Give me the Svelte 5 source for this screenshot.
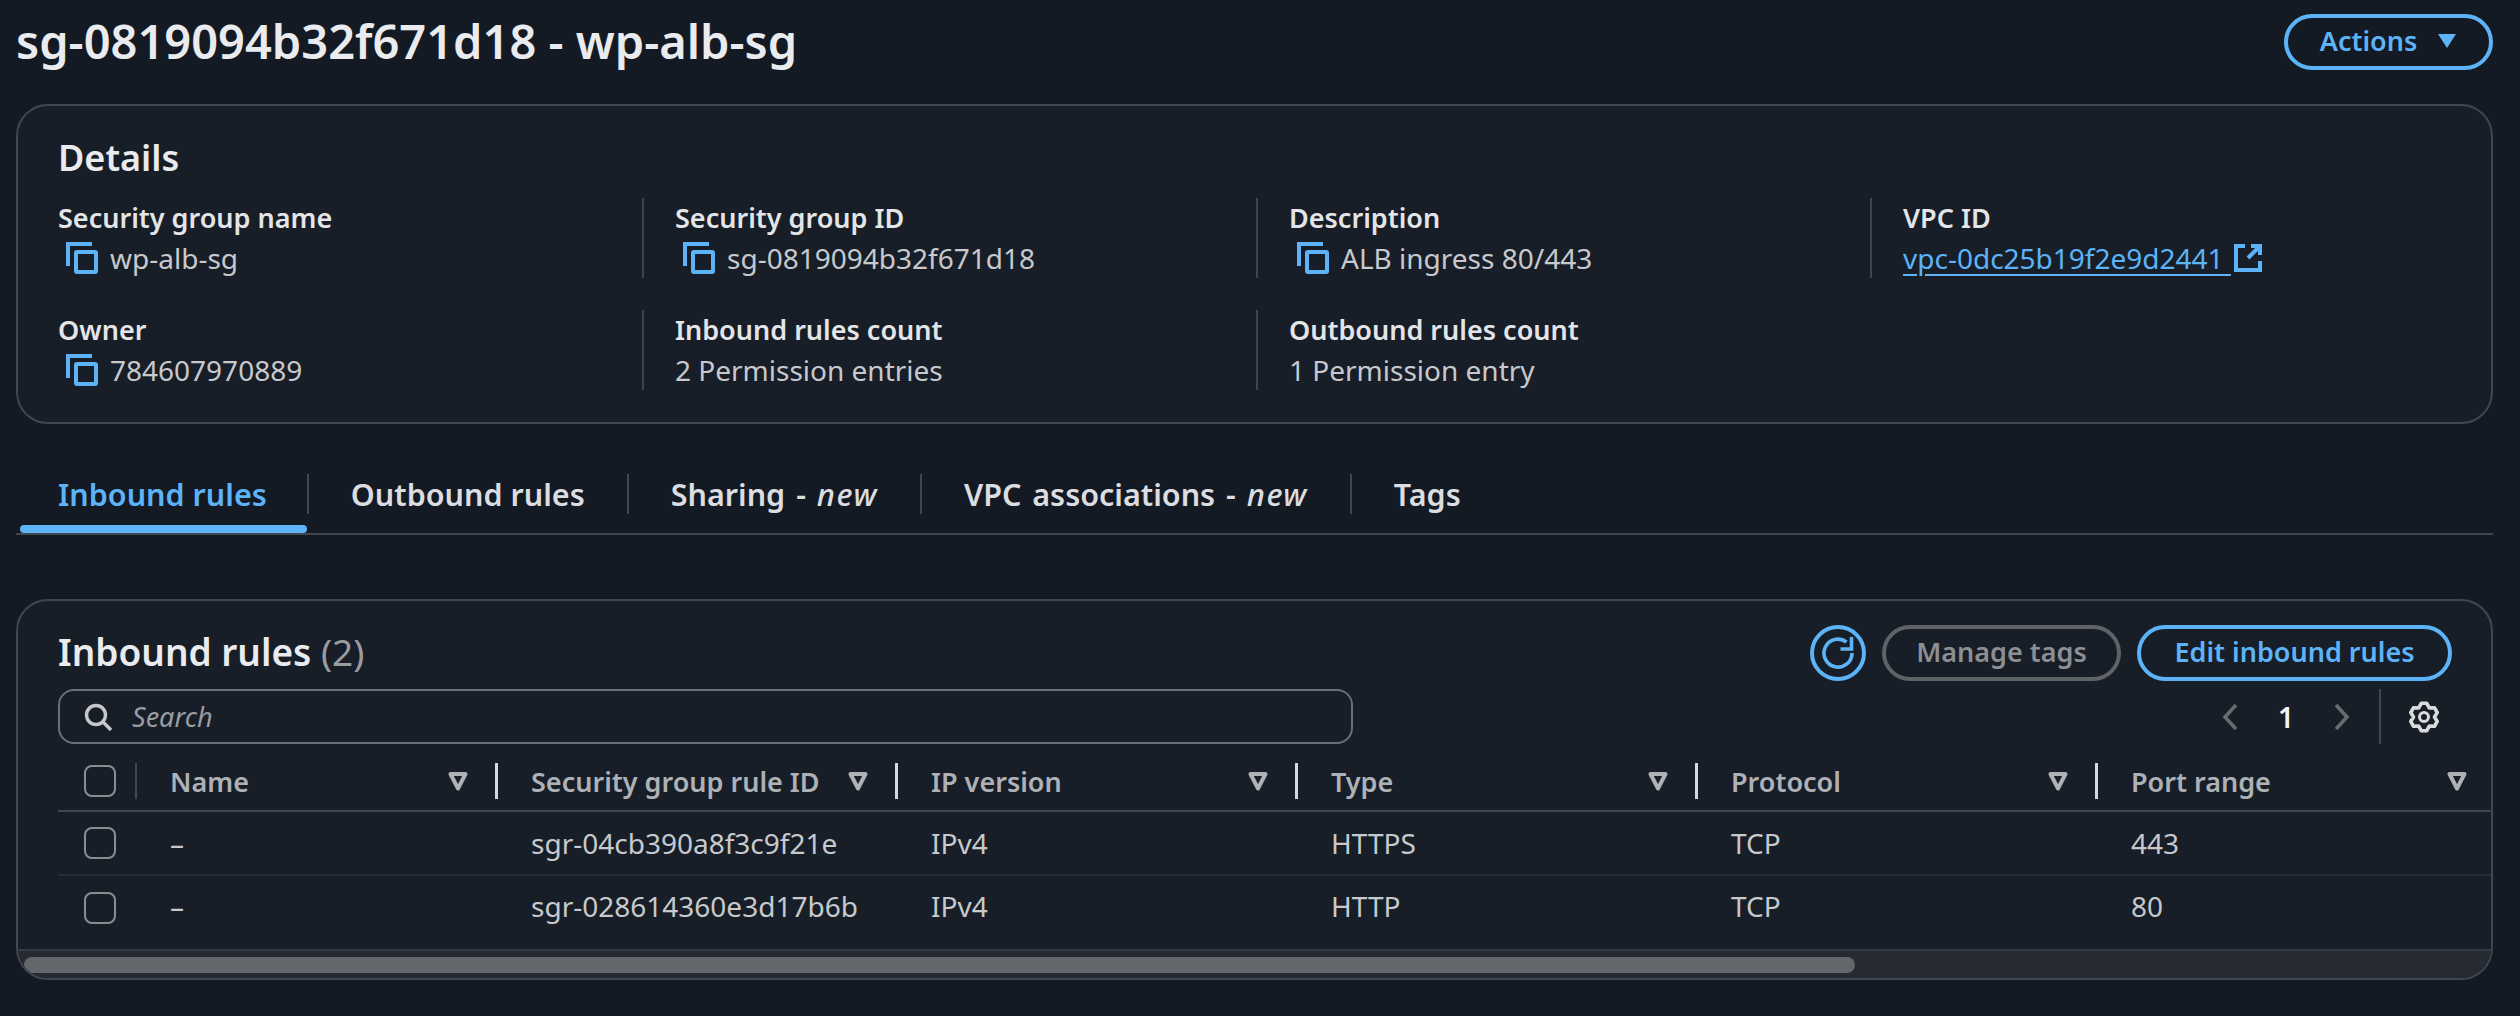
<script>
  const details = [
    { label: "Security group name", value: "wp-alb-sg", copy: true },
    { label: "Security group ID", value: "sg-0819094b32f671d18", copy: true },
    { label: "Description", value: "ALB ingress 80/443", copy: true },
    { label: "VPC ID", value: "vpc-0dc25b19f2e9d2441", link: true },
    { label: "Owner", value: "784607970889", copy: true },
    { label: "Inbound rules count", value: "2 Permission entries" },
    { label: "Outbound rules count", value: "1 Permission entry" },
  ];
  const columns = ["Name", "Security group rule ID", "IP version", "Type", "Protocol", "Port range"];
  const rows = [
    ["–", "sgr-04cb390a8f3c9f21e", "IPv4", "HTTPS", "TCP", "443"],
    ["–", "sgr-028614360e3d17b6b", "IPv4", "HTTP", "TCP", "80"],
  ];

  // six lobed gear outline, rounded off by the stroke join
  const gear = [];
  for (let i = 0; i < 6; i++) {
    const a = (i * 60 - 90) * (Math.PI / 180);
    const pts = [
      [-0.5236, 10.5],
      [-0.2, 14],
      [0.2, 14],
    ];
    for (const [off, r] of pts) {
      gear.push(`${(16 + r * Math.cos(a + off)).toFixed(2)} ${(16 + r * Math.sin(a + off)).toFixed(2)}`);
    }
  }
  const gearPath = "M" + gear.join("L") + "Z";
</script>

{#snippet copyIcon()}
  <svg class="copy" viewBox="0 0 32 32" width="32" height="32" aria-hidden="true">
    <path d="M2 24V2h24" fill="none" stroke="#5db3f8" stroke-width="4" />
    <rect x="10" y="10" width="20" height="20" rx="1" fill="none" stroke="#5db3f8" stroke-width="4" />
  </svg>
{/snippet}

{#snippet sortIcon()}
  <svg class="sort" viewBox="0 0 20 20" width="20" height="20" aria-hidden="true">
    <path d="M2.500 3h15L10 17.500z" fill="none" stroke="#aeb1b6" stroke-width="4" stroke-linejoin="round" />
  </svg>
{/snippet}

<div class="page">
  <header class="title-row">
    <h1>sg-0819094b32f671d18 - wp-alb-sg</h1>
    <button class="btn primary actions">Actions
      <svg viewBox="0 0 20 16" width="20" height="16" aria-hidden="true"><path d="M1 1h18l-9 14z" fill="#5db3f8" /></svg>
    </button>
  </header>

  <section class="card details">
    <h2>Details</h2>
    <div class="detail-grid">
      {#each details as item}
        <div class="detail">
          <div class="label">{item.label}</div>
          <div class="value">
            {#if item.copy}{@render copyIcon()}{/if}
            {#if item.link}
              <a href="#top"><span>{item.value}&nbsp;</span>
                <svg viewBox="0 0 28 28" width="28" height="28" aria-hidden="true">
                  <path d="M11 2H2v24h24v-9M17 2h9v9M25 3 14 14" fill="none" stroke="#5db3f8" stroke-width="4" />
                </svg>
              </a>
            {:else}
              {item.value}
            {/if}
          </div>
        </div>
      {/each}
    </div>
  </section>

  <nav class="tabs">
    <div class="tab active"><span>Inbound rules</span></div>
    <div class="tab"><span>Outbound rules</span></div>
    <div class="tab"><span class="tagged">Sharing - <em>new</em></span></div>
    <div class="tab"><span class="tagged">VPC associations - <em>new</em></span></div>
    <div class="tab"><span>Tags</span></div>
  </nav>

  <section class="card rules">
    <div class="rules-head">
      <h2>Inbound rules <span class="count">(2)</span></h2>
      <div class="rules-actions">
        <button class="btn primary refresh" aria-label="Refresh">
          <svg viewBox="0 0 32 32" width="32" height="32" aria-hidden="true">
            <path d="M30 16A14 14 0 1 1 24.500 5" fill="none" stroke="#5db3f8" stroke-width="3.600" />
            <path d="M29.500 0v12H18.500" fill="none" stroke="#5db3f8" stroke-width="3.600" />
          </svg>
        </button>
        <button class="btn disabled">Manage tags</button>
        <button class="btn primary edit">Edit inbound rules</button>
      </div>
    </div>
    <div class="filter-row">
      <div class="search">
        <svg viewBox="0 0 28 28" width="28" height="28" aria-hidden="true">
          <circle cx="12" cy="12" r="9.500" fill="none" stroke="#c6c8cc" stroke-width="3.400" />
          <path d="m19 19 8 8" stroke="#c6c8cc" stroke-width="3.400" />
        </svg>
        <span>Search</span>
      </div>
      <div class="pager">
        <svg viewBox="0 0 16 26" width="16" height="26" aria-hidden="true"><path d="M14 1 3 13l11 12" fill="none" stroke="#686b70" stroke-width="3.600" /></svg>
        <span class="page-num">1</span>
        <svg viewBox="0 0 16 26" width="16" height="26" aria-hidden="true"><path d="m2 1 11 12L2 25" fill="none" stroke="#686b70" stroke-width="3.600" /></svg>
      </div>
      <div class="prefs">
        <svg viewBox="0 0 32 32" width="32" height="32" aria-hidden="true">
          <path d={gearPath} fill="none" stroke="#d8dadd" stroke-width="3.600" stroke-linejoin="round" />
          <circle cx="16" cy="16" r="4.500" fill="none" stroke="#d8dadd" stroke-width="3" />
        </svg>
      </div>
    </div>

    <div class="table">
      <div class="tr th">
        <div class="select"><span class="check"></span></div>
        {#each columns as col, i}
          <div class="cell" class:first={i === 0}>
            <span>{col}</span>
            {@render sortIcon()}
          </div>
        {/each}
      </div>
      {#each rows as row, r}
        <div class="tr td" class:second={r === 1}>
          <div class="select"><span class="check"></span></div>
          {#each row as val, i}
            <div class="cell" class:first={i === 0}>{val}</div>
          {/each}
        </div>
      {/each}
    </div>
    <div class="scrollbar"><div class="thumb"></div></div>
  </section>
</div>

<style>
  :global(body) {
    margin: 0;
    background: #141a23;
  }

  .page {
    width: 2520px;
    height: 1016px;
    padding: 0 27px 0 16px;
    box-sizing: border-box;
    color: #e4e5e8;
    font-family: "Noto Sans", sans-serif;
    font-size: 28px;
    overflow: hidden;
  }

  .title-row {
    display: flex;
    align-items: center;
    justify-content: space-between;
    height: 84px;
    box-sizing: border-box;
  }

  h1 {
    margin: -2px 0 0;
    font-size: 47px;
    font-weight: 600;
    color: #eaebee;
  }

  h2 {
    margin: 0;
    font-size: 36px;
    font-weight: 600;
    color: #eaebee;
  }

  .btn {
    display: inline-flex;
    align-items: center;
    justify-content: center;
    box-sizing: border-box;
    height: 56px;
    border-radius: 28px;
    border: 4px solid;
    background: transparent;
    font: inherit;
    font-size: 27px;
    line-height: 44px;
    font-weight: 600;
    padding: 0 0 2px;
  }

  .primary {
    border-color: #5db3f8;
    color: #5db3f8;
  }

  .disabled {
    border-color: #5f6368;
    color: #8b8e93;
    width: 239px;
  }

  .actions {
    width: 209px;
    gap: 20px;
  }

  .refresh {
    width: 56px;
    padding: 0;
  }

  .edit {
    width: 315px;
  }

  .card {
    border: 2px solid #42464e;
    border-radius: 32px;
    background: #171e27;
    box-sizing: border-box;
  }

  .details {
    margin-top: 20px;
    height: 320px;
    padding: 27px 40px;
  }

  .detail-grid {
    display: grid;
    grid-template-columns: 617px 614px 614px 614px;
    grid-auto-rows: 80px;
    row-gap: 32px;
    margin-top: 16px;
  }

  .detail {
    border-left: 2px solid #3f444b;
    padding-left: 31px;
    margin-left: -33px;
  }

  .detail:nth-child(4n + 1) {
    border-left: 0;
    padding-left: 0;
    margin-left: 0;
  }

  .label {
    font-size: 27px;
    line-height: 40px;
    font-weight: 600;
    color: #e4e5e8;
  }

  .value {
    display: flex;
    align-items: center;
    gap: 12px;
    line-height: 40px;
    color: #c7c9cd;
  }

  .copy {
    margin-left: 8px;
    flex: none;
  }

  a {
    display: inline-flex;
    align-items: center;
    gap: 3px;
    color: #5db3f8;
    text-underline-offset: 5px;
  }

  .tabs {
    display: flex;
    align-items: flex-end;
    height: 109px;
    border-bottom: 2px solid #42464e;
  }

  .tab {
    position: relative;
    display: flex;
    align-items: center;
    height: 40px;
    padding: 0 42px;
    margin-bottom: 19px;
    border-left: 2px solid #42464e;
    font-size: 30.500px;
    font-weight: 600;
    color: #dcdde0;
    white-space: nowrap;
  }

  .tab:first-child {
    border-left: 0;
    padding: 0 40px 0 42px;
  }

  .tagged {
    word-spacing: 3px;
  }

  .tab em {
    font-size: 31px;
    font-weight: 500;
    letter-spacing: 1.500px;
  }

  .active {
    color: #5db3f8;
  }

  .active::after {
    content: "";
    position: absolute;
    left: 4px;
    right: 0;
    bottom: -19px;
    height: 8px;
    border-radius: 4px;
    background: #5db3f8;
  }

  .rules {
    margin-top: 64px;
    height: 381px;
    overflow: hidden;
  }

  .rules-head {
    display: flex;
    align-items: center;
    justify-content: space-between;
    padding: 24px 39px 0 40px;
    height: 55px;
  }

  .rules-head h2 {
    font-size: 37px;
    margin-top: -2px;
  }

  .rules-actions {
    display: flex;
    gap: 16px;
  }

  .count {
    font-weight: 400;
    color: #9a9ca1;
  }

  .filter-row {
    display: flex;
    align-items: center;
    height: 55px;
    margin-top: 9px;
    padding-left: 40px;
  }

  .search {
    display: flex;
    align-items: center;
    gap: 20px;
    width: 1295px;
    height: 55px;
    box-sizing: border-box;
    padding-left: 24px;
    border: 2px solid #6b6f75;
    border-radius: 16px;
    font-size: 27px;
    font-style: italic;
    color: #9a9ca1;
  }

  .pager {
    display: flex;
    align-items: center;
    margin-left: auto;
    gap: 40px;
  }

  .page-num {
    color: #f4f5f6;
    font-weight: 600;
  }

  .prefs {
    display: flex;
    align-items: center;
    height: 55px;
    margin-left: 29px;
    padding: 0 51px 0 27px;
    border-left: 2px solid #42464e;
  }

  .tr {
    display: grid;
    grid-template-columns: 77px 360px 400px 400px 400px 400px 396px;
    align-items: center;
    margin-left: 40px;
    box-sizing: border-box;
  }

  .th {
    height: 68px;
    padding-top: 8px;
    border-bottom: 2px solid #42464e;
    font-size: 27px;
    font-weight: 600;
    color: #aeb1b6;
  }

  .td {
    height: 64px;
    color: #c7c9cd;
    border-bottom: 2px solid #272c34;
  }

  .td.second {
    border-bottom: 0;
    margin-bottom: 9px;
  }

  .td.second .cell {
    margin-bottom: 5px;
  }

  .select {
    padding-left: 26px;
    display: flex;
  }

  .check {
    display: block;
    width: 32px;
    height: 32px;
    box-sizing: border-box;
    border: 2px solid #8a8d92;
    border-radius: 8px;
  }

  .cell {
    display: flex;
    align-items: center;
    justify-content: space-between;
    padding: 0 27px 0 36px;
    box-sizing: border-box;
  }

  .cell:last-child {
    padding-right: 24px;
  }

  .cell.first {
    padding-left: 35px;
  }

  .th .cell {
    height: 36px;
    border-left: 3px solid #d6d8db;
    padding-left: 33px;
  }

  .th .cell.first {
    border-left: 2px solid #42464e;
    padding-left: 33px;
  }

  .sort {
    flex: none;
  }

  .scrollbar {
    height: 29px;
    background: #252a33;
    border-top: 2px solid #353a42;
    box-sizing: border-box;
    padding-top: 6px;
  }

  .thumb {
    width: 1831px;
    height: 16px;
    margin-left: 6px;
    border-radius: 8px;
    background: #63666b;
  }
</style>
